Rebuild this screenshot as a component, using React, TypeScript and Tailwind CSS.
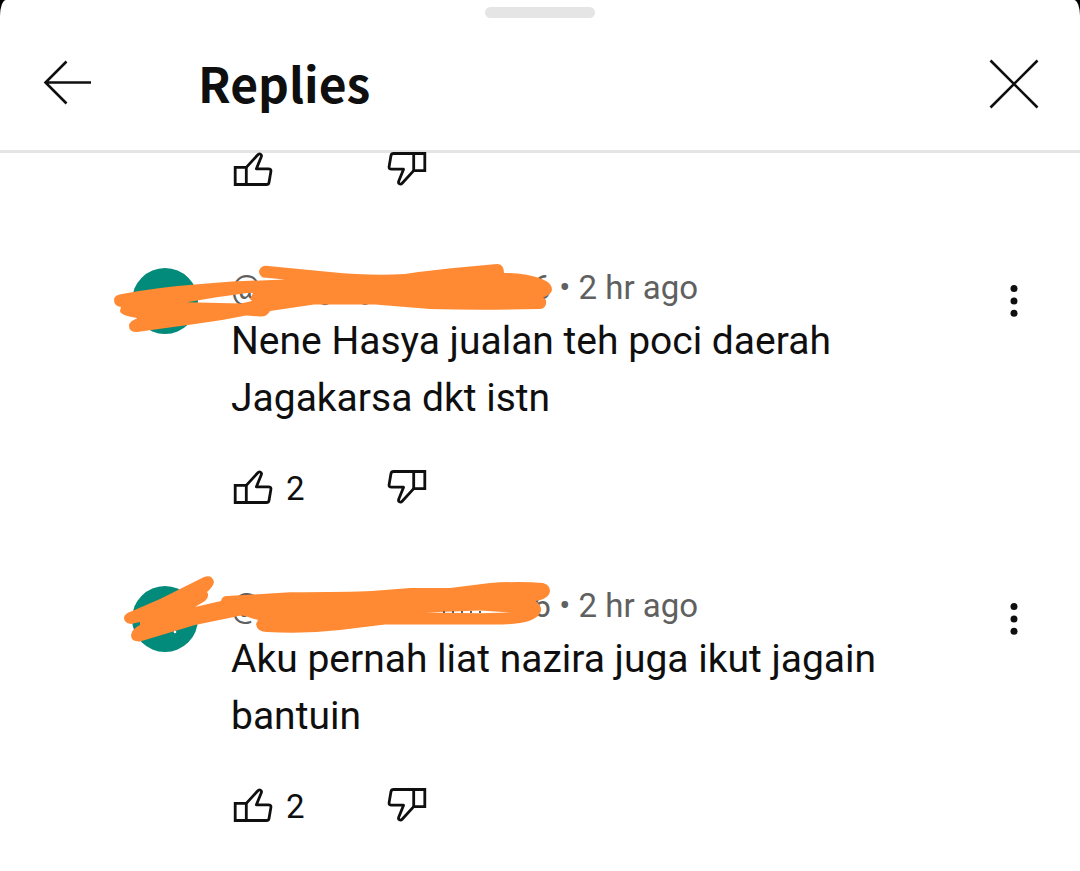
import type { ReactNode } from "react";

function ThumbShape() {
  return (
    <g fill="none" stroke="#0f0f0f" strokeWidth="2.8" strokeLinejoin="miter">
      <path d="M2.2 15.4H13.3V32.5H2.2Z" />
      <path
        strokeLinejoin="round"
        d="M13.3 15.4L24.6 3C26.500 .8 29.3 2.200 28.2 5L23.4 16.8H35.4Q38.3 16.8 37.9 19.4L36 30.4Q35.6 32.5 33.4 32.5H13.3"
      />
    </g>
  );
}

function Actions({ likes }: { likes?: number }) {
  return (
    <div className="flex h-9 text-[33px] leading-9 text-[#0f0f0f]">
      <button type="button" aria-label="Like" className="flex w-[154px] items-center gap-[13px]">
        <svg viewBox="0 0 40 36" className="h-9 w-10 shrink-0">
          <ThumbShape />
        </svg>
        {likes !== undefined && <span className="pt-[2px]">{likes}</span>}
      </button>
      <button type="button" aria-label="Dislike">
        <svg viewBox="0 0 40 36" className="h-9 w-10">
          <g transform="rotate(180 20 17)">
            <ThumbShape />
          </g>
        </svg>
      </button>
    </div>
  );
}

function Reply({ text, likes, children }: { text: string; likes: number; children: ReactNode }) {
  return (
    <article className="relative flex items-start pr-[41px] pl-[132px]">
      <div className="mt-[5px] size-[66px] shrink-0 rounded-full bg-[#028a7a]" />
      <div className="ml-[33px] min-w-0 flex-1">
        <div className="flex h-[50px] items-center text-[33px] whitespace-pre text-[#606060]">
          <span className="flex w-80 justify-between">
            <span>@</span>
            <span>6</span>
          </span>
          <span> • 2 hr ago</span>
        </div>
        <p className="max-w-[680px] text-[39px] leading-[57px] text-[#0f0f0f]">{text}</p>
        <div className="mt-[43px] pl-[2px]">
          <Actions likes={likes} />
        </div>
      </div>
      <button type="button" aria-label="More options" className="mt-[18px]">
        <svg viewBox="0 0 50 40" className="h-10 w-[50px]" fill="#0f0f0f">
          <circle cx="25" cy="7.5" r="3.5" />
          <circle cx="25" cy="20" r="3.5" />
          <circle cx="25" cy="32.3" r="3.5" />
        </svg>
      </button>
      {children}
    </article>
  );
}

function FirstScribble() {
  return (
    <svg viewBox="110 263 450 80" className="pointer-events-none absolute top-0 left-[110px] h-20 w-[450px] overflow-visible">
      <path d="M321 303Q325 305.500 329 303M362 303Q365 305 368 303" fill="none" stroke="#606060" strokeWidth="2" />
      <path
        fill="#ff8a33"
        fillRule="evenodd"
        d="M114 300Q114 295 122 294Q160 287 195 284.5L232 281.5L285 279.5L263 277.5Q259 275 259 271Q261 265 268 266L330 272Q370 276 405 274Q430 270 470 266.500L497 264Q504 264 504 273Q526 272.500 543 279.500Q552 283 552 290Q551 295 543 297.500Q547 299 546 304Q545 309 539 309Q480 310.500 430 309L375 304.500H330L314 304.500L270 311Q267 317 260 316.500L246 315.500Q220 321 195 324L137 332Q129 332 129 326Q129 321 138 318Q121 316 120 311L121 307Q114 306 114 300ZM187 302.300L215 297.500L247 293L253 293L250 299L252 301L241 303.500Z"
      />
    </svg>
  );
}

function SecondScribble() {
  return (
    <svg viewBox="110 581 450 80" className="pointer-events-none absolute top-0 left-[110px] h-20 w-[450px] overflow-visible">
      <path
        fill="#ff8a33"
        d="M124 618Q124 614 131 611.500L160 599L204 577Q212 574 214 582Q213 587 207 592Q210 596 205 601L195 607L221 601Q222 596 227 596L245 595L290 592.300Q350 592 372 591L410 588H450L490 583Q520 581 543 583Q550 585 550 591Q549 599 535 601Q542 605 541 611Q538 620 520 623Q505 625 490 624.500H385L340 630Q305 634 267 632Q257 632 256 624L258 620L248 617Q242 614 234 617L195 625L140 641.500Q131 642 131 635Q132 629 140 625V622L131 624Q124 623 124 618Z"
      />
      <path fill="#fff" d="M426 612.500L480 610.500L512 612.500L480 613.300Z" />
      <path d="M443 612H486" stroke="#606060" strokeWidth="1.800" strokeDasharray="2 7" />
      <circle cx="175" cy="632" r="1.300" fill="#fff" />
    </svg>
  );
}

export default function App() {
  return (
    <div className="min-h-screen bg-black font-[Roboto,sans-serif]">
      <div className="min-h-screen bg-white [border-radius:6px_6px_0_0/16px_16px_0_0]">
        <header className="border-b-3 border-[#e5e5e5] pt-[7px]">
          <div className="mx-auto h-[11px] w-[110px] rounded-full bg-[#e5e5e5]" />
          <div className="flex h-[132px] items-center pr-[41px] pl-[43px]">
            <button type="button" aria-label="Back">
              <svg viewBox="0 0 48 50" className="h-[50px] w-12" fill="none" stroke="#0f0f0f" strokeWidth="2.6">
                <path d="M23.500 2.500L2.500 23.500L23.500 44.500M2.500 23.500H48" />
              </svg>
            </button>
            <h1 className="ml-[107px] flex-1 pb-1 font-['Noto_Sans_CJK_SC',sans-serif] text-[48px] leading-[60px] font-bold text-[#0f0f0f]">
              Replies
            </h1>
            <button type="button" aria-label="Close">
              <svg viewBox="0 0 50 50" className="size-[50px]" fill="none" stroke="#0f0f0f" strokeWidth="2.6">
                <path d="M1.500 1.500L48.500 48.500M48.500 1.500L1.500 48.500" />
              </svg>
            </button>
          </div>
        </header>
        <main className="flex flex-col gap-[75px]">
          <div className="-mt-px pl-[233px]">
            <Actions />
          </div>
          <Reply text="Nene Hasya jualan teh poci daerah Jagakarsa dkt istn" likes={2}>
            <FirstScribble />
          </Reply>
          <Reply text="Aku pernah liat nazira juga ikut jagain bantuin" likes={2}>
            <SecondScribble />
          </Reply>
        </main>
      </div>
    </div>
  );
}
